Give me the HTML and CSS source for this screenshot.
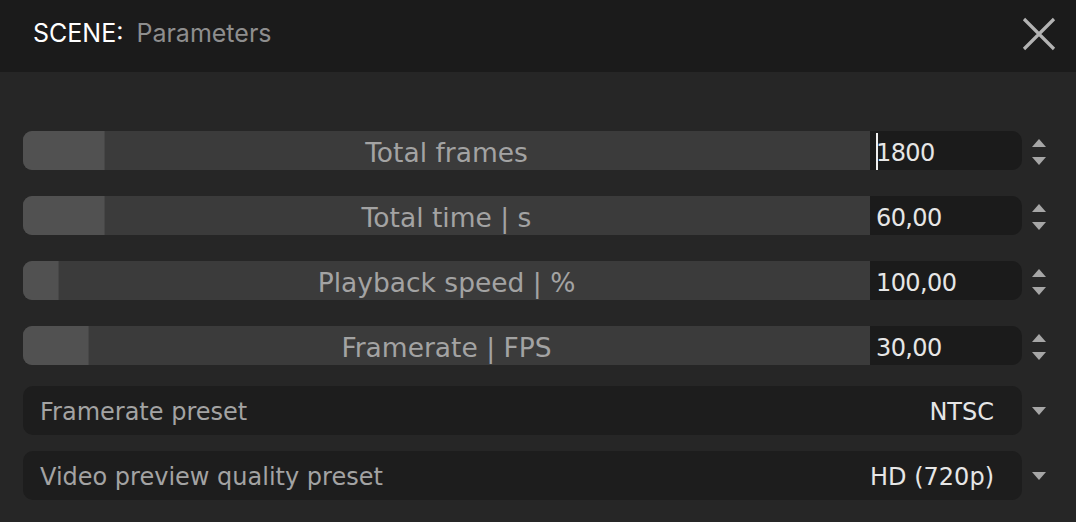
FILE: index.html
```html
<!DOCTYPE html>
<html lang="en">
<head>
    <meta charset="UTF-8">
    <title>Scene parameters</title>
    <link rel="stylesheet" href="styles.css">
</head>
<body>
    <div class="panel">
        <div class="panel-header">
            <div class="panel-title"><span class="title-scope">SCENE:</span> <span class="title-name">Parameters</span></div>
            <button class="close-button" aria-label="Close">
                <svg width="34" height="34" viewBox="0 0 34 34"><path d="M2 2L32 32M32 2L2 32" stroke="#b3b3b3" stroke-width="3.2" fill="none"/></svg>
            </button>
        </div>

        <div class="panel-body">
            <div class="param-row">
                <div class="slider"><div class="slider-fill fill-1"></div><span class="slider-label">Total frames</span></div>
                <div class="value-box"><span class="caret"></span>1800</div>
                <div class="spinner"><span class="arrow-up"></span><span class="arrow-down"></span></div>
            </div>
            <div class="param-row">
                <div class="slider"><div class="slider-fill fill-2"></div><span class="slider-label">Total time | s</span></div>
                <div class="value-box">60,00</div>
                <div class="spinner"><span class="arrow-up"></span><span class="arrow-down"></span></div>
            </div>
            <div class="param-row">
                <div class="slider"><div class="slider-fill fill-3"></div><span class="slider-label">Playback speed | %</span></div>
                <div class="value-box">100,00</div>
                <div class="spinner"><span class="arrow-up"></span><span class="arrow-down"></span></div>
            </div>
            <div class="param-row">
                <div class="slider"><div class="slider-fill fill-4"></div><span class="slider-label">Framerate | FPS</span></div>
                <div class="value-box">30,00</div>
                <div class="spinner"><span class="arrow-up"></span><span class="arrow-down"></span></div>
            </div>

            <div class="select-row">
                <div class="select-box">
                    <span class="select-label">Framerate preset</span>
                    <span class="select-value">NTSC</span>
                </div>
                <div class="select-arrow"><span class="arrow-down"></span></div>
            </div>
            <div class="select-row">
                <div class="select-box">
                    <span class="select-label">Video preview quality preset</span>
                    <span class="select-value">HD (720p)</span>
                </div>
                <div class="select-arrow"><span class="arrow-down"></span></div>
            </div>
        </div>
    </div>
</body>
</html>
```

FILE: styles.css
```css
* {
    margin: 0;
    padding: 0;
    box-sizing: border-box;
}

body {
    background: #262626;
    font-family: 'DejaVu Sans', sans-serif;
    width: 1076px;
    height: 522px;
    overflow: hidden;
}

.panel-header {
    height: 72px;
    background: #1b1b1b;
    display: flex;
    align-items: center;
    justify-content: space-between;
    padding: 0 20px 0 33px;
}

.panel-title {
    font-family: 'Inter', sans-serif;
    font-size: 25px;
    padding-bottom: 6px;
}

.title-scope {
    color: #ffffff;
}

.title-name {
    color: #8e8e8e;
    margin-left: 6px;
}

.close-button {
    background: none;
    border: none;
    width: 34px;
    height: 34px;
    display: flex;
    margin-bottom: 4px;
}

.panel-body {
    padding: 59px 0 0 23px;
}

.param-row {
    display: flex;
    height: 39px;
    margin-bottom: 26px;
}

.param-row:nth-child(4) {
    margin-bottom: 21px;
}

.slider {
    position: relative;
    width: 847px;
    background: #3b3b3b;
    border-radius: 9px 0 0 9px;
    overflow: hidden;
    display: flex;
    align-items: center;
    justify-content: center;
    padding-top: 3px;
}

.slider-fill {
    position: absolute;
    left: 0;
    top: 0;
    bottom: 0;
    background: #515151;
    border-right: 1px solid #474747;
}

.fill-1, .fill-2 { width: 82px; }
.fill-3 { width: 36px; }
.fill-4 { width: 66px; }

.slider-label {
    position: relative;
    color: #a3a3a3;
    font-size: 26.5px;
}

.value-box {
    position: relative;
    width: 152px;
    background: #1b1b1b;
    border-radius: 0 10px 10px 0;
    color: #e6e6e6;
    font-size: 24px;
    letter-spacing: -0.6px;
    display: flex;
    align-items: center;
    padding: 4px 0 0 6px;
}

.caret {
    position: absolute;
    left: 6px;
    top: 2px;
    bottom: 0;
    width: 2px;
    background: #f0f0f0;
}

.spinner {
    width: 31px;
    display: flex;
    flex-direction: column;
    align-items: center;
    justify-content: center;
    gap: 10px;
    padding: 3px 0 0 2px;
}

.arrow-up, .arrow-down {
    display: block;
    width: 0;
    height: 0;
    border-left: 7px solid transparent;
    border-right: 7px solid transparent;
}

.arrow-up {
    border-bottom: 8px solid #a6a6a6;
}

.arrow-down {
    border-top: 8px solid #a6a6a6;
}

.select-row {
    display: flex;
    height: 49px;
    margin-bottom: 16px;
}

.select-box {
    width: 999px;
    background: #1d1d1d;
    border-radius: 10px;
    display: flex;
    align-items: center;
    justify-content: space-between;
    padding: 2px 28px 0 17px;
    font-size: 24px;
}

.select-label {
    color: #a3a3a3;
}

.select-value {
    color: #e6e6e6;
}

.select-arrow {
    width: 31px;
    display: flex;
    align-items: center;
    justify-content: center;
    padding-left: 2px;
}
```
